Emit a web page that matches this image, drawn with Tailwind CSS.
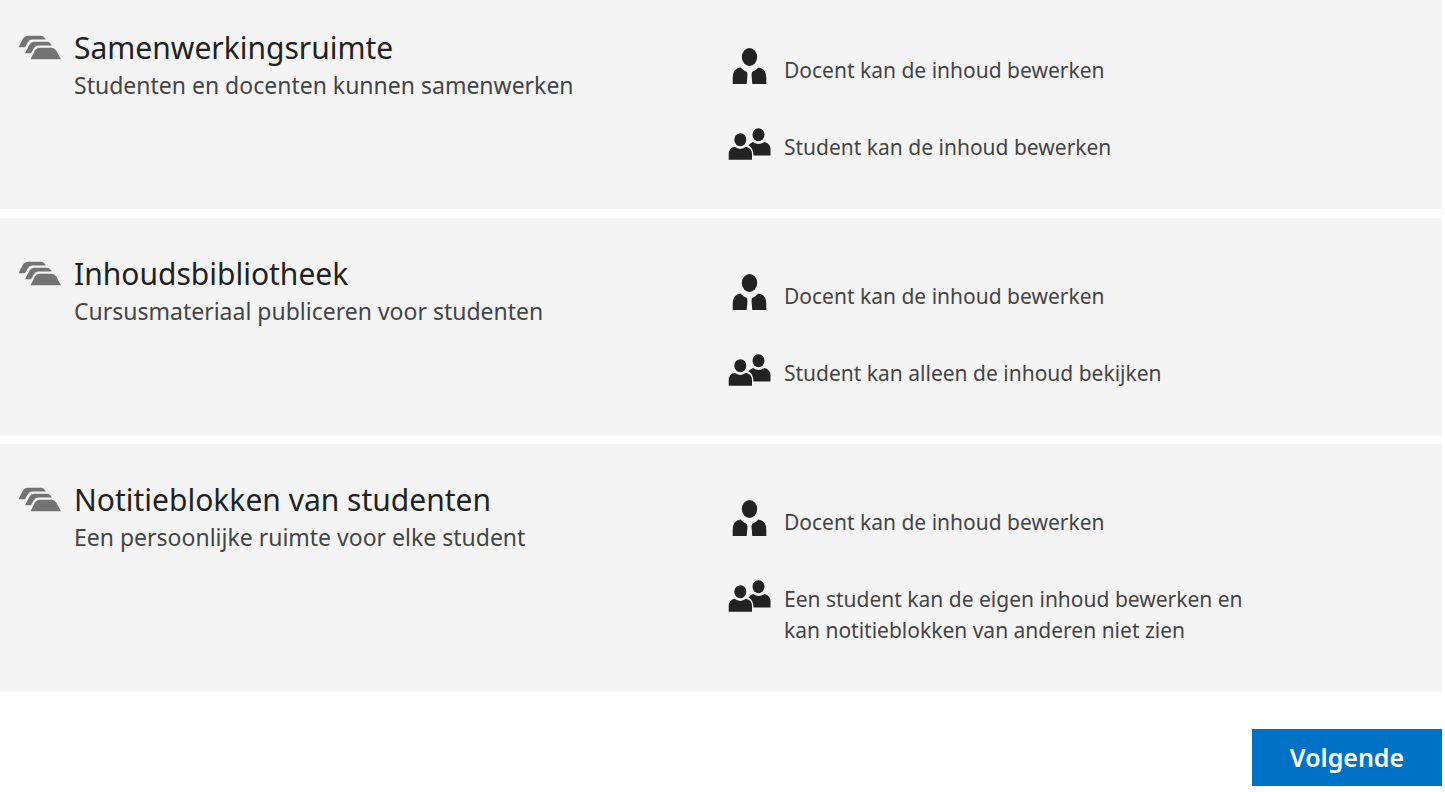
<!DOCTYPE html>
<html lang="nl">
<head>
  <meta charset="UTF-8" />
  <meta name="viewport" content="width=device-width, initial-scale=1" />
  <title>Samenwerkingsruimte</title>
  <script src="https://cdn.jsdelivr.net/npm/@tailwindcss/browser@4"></script>
</head>
<body class="bg-white font-['Noto_Sans',sans-serif] text-[#444444]">
  <!-- Shared icons -->
  <svg class="hidden" aria-hidden="true">
    <symbol id="tabs" viewBox="0 0 44 26">
      <g fill="#737373">
        <path d="M0.500 12.300 L5 3.500 Q6.500 0.700 9.500 0.700 H23 Q26 0.700 27.800 4.600 H14.500 Q11.500 4.600 10 7 L7 12.300 Z" />
        <path d="M7 18.300 L11.500 9.500 Q13 6.700 16 6.700 H29 Q32 6.700 33.800 10.600 H20.500 Q17.500 10.600 16 13 L13 18.300 Z" />
        <path d="M12.500 24.300 L17 15.300 Q18.500 12.700 21.500 12.700 H33.500 Q36.500 12.700 38 15.300 L43 24.300 Z" />
      </g>
    </symbol>
    <symbol id="teacher" viewBox="0 0 44 40">
      <g fill="#222222">
        <ellipse cx="21.500" cy="11" rx="7.700" ry="9" />
        <path d="M4.700 38 V31.500 Q5 22.500 12.500 21.500 Q15 24.500 19 26 L19.500 29 L18.700 38 Z" />
        <path d="M38.300 38 V31.500 Q38 22.500 30.500 21.500 Q28 24.500 24 26 L23.500 29 L24.300 38 Z" />
      </g>
    </symbol>
    <symbol id="students" viewBox="0 0 44 40">
      <g fill="#222222">
        <ellipse cx="30.500" cy="9.700" rx="6" ry="6.500" />
        <path d="M25.500 30.500 Q25.500 23 20.500 20.500 Q22 18 25 17 Q30.500 21 36.500 17 Q42.500 18.500 42.500 24.500 V30.500 Z" />
        <ellipse cx="12.300" cy="14.700" rx="6" ry="6.500" />
        <path d="M0.700 34.700 V29.500 Q0.700 23 6.500 21.800 Q12.300 26 18 21.800 Q24 23 24 29.500 V34.700 Z" />
      </g>
    </symbol>
  </svg>

  <main class="mr-[3px]">
    <div class="flex flex-col gap-[9px]">
      <section class="grid grid-cols-2 bg-[#f4f4f4] pt-7 pb-[46px]">
        <div class="flex gap-3 pl-[18px]">
          <svg class="mt-[7px] h-[26px] w-11 shrink-0" aria-hidden="true"><use href="#tabs" /></svg>
          <div>
            <h2 class="text-[30px] leading-10 text-[#212121]">Samenwerkingsruimte</h2>
            <p class="text-[23px] leading-[34px]">Studenten en docenten kunnen samenwerken</p>
          </div>
        </div>
        <ul class="flex flex-col gap-[46px] pt-[27px] pl-[7px] text-[21px] leading-[31px]">
          <li class="flex gap-3">
            <svg class="-my-[9px] h-10 w-11 shrink-0" aria-hidden="true"><use href="#teacher" /></svg>
            <span>Docent kan de inhoud bewerken</span>
          </li>
          <li class="flex gap-3">
            <svg class="-my-[7px] h-10 w-11 shrink-0" aria-hidden="true"><use href="#students" /></svg>
            <span>Student kan de inhoud bewerken</span>
          </li>
        </ul>
      </section>

      <section class="grid grid-cols-2 bg-[#f4f4f4] pt-9 pb-[46px]">
        <div class="flex gap-3 pl-[18px]">
          <svg class="mt-[7px] h-[26px] w-11 shrink-0" aria-hidden="true"><use href="#tabs" /></svg>
          <div>
            <h2 class="text-[30px] leading-10 text-[#212121]">Inhoudsbibliotheek</h2>
            <p class="text-[23px] leading-[34px]">Cursusmateriaal publiceren voor studenten</p>
          </div>
        </div>
        <ul class="flex flex-col gap-[46px] pt-[27px] pl-[7px] text-[21px] leading-[31px]">
          <li class="flex gap-3">
            <svg class="-my-[9px] h-10 w-11 shrink-0" aria-hidden="true"><use href="#teacher" /></svg>
            <span>Docent kan de inhoud bewerken</span>
          </li>
          <li class="flex gap-3">
            <svg class="-my-[7px] h-10 w-11 shrink-0" aria-hidden="true"><use href="#students" /></svg>
            <span>Student kan alleen de inhoud bekijken</span>
          </li>
        </ul>
      </section>

      <section class="grid grid-cols-2 bg-[#f4f4f4] pt-9 pb-[45px]">
        <div class="flex gap-3 pl-[18px]">
          <svg class="mt-[7px] h-[26px] w-11 shrink-0" aria-hidden="true"><use href="#tabs" /></svg>
          <div>
            <h2 class="text-[30px] leading-10 text-[#212121]">Notitieblokken van studenten</h2>
            <p class="text-[23px] leading-[34px]">Een persoonlijke ruimte voor elke student</p>
          </div>
        </div>
        <ul class="flex flex-col gap-[46px] pt-[27px] pl-[7px] text-[21px] leading-[31px]">
          <li class="flex gap-3">
            <svg class="-my-[9px] h-10 w-11 shrink-0" aria-hidden="true"><use href="#teacher" /></svg>
            <span>Docent kan de inhoud bewerken</span>
          </li>
          <li class="flex gap-3">
            <svg class="-my-[7px] h-10 w-11 shrink-0" aria-hidden="true"><use href="#students" /></svg>
            <span class="max-w-[480px]">Een student kan de eigen inhoud bewerken en kan notitieblokken van anderen niet zien</span>
          </li>
        </ul>
      </section>
    </div>

    <div class="flex justify-end pt-[38px]">
      <button type="button" class="h-[57px] w-[190px] bg-[#0072c6] text-[25px] font-semibold text-white hover:bg-[#005a9e]">Volgende</button>
    </div>
  </main>
</body>
</html>
